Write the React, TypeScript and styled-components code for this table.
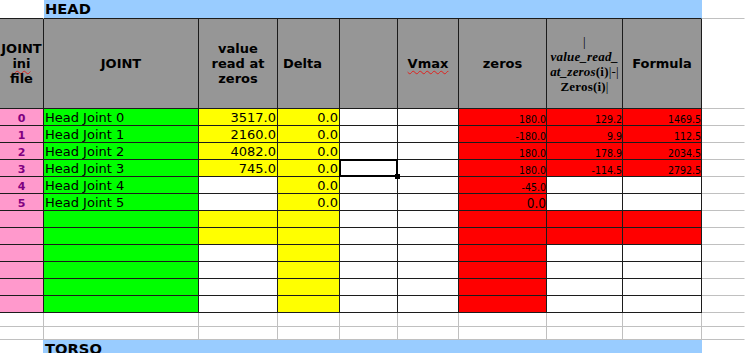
import React from 'react';
import styled, { createGlobalStyle } from 'styled-components';

const COL = {
  green: '#00ff00',
  yellow: '#ffff00',
  red: '#ff0000',
  pink: '#ff99cc',
  blue: '#99ccff',
  grey: '#969696',
  line: '#1c1c1c',
  light: '#c0c0c0',
  white: '#ffffff',
};

const GlobalStyle = createGlobalStyle`
  html, body { margin: 0; padding: 0; background: #fff; overflow: hidden; }
  body { font-family: "DejaVu Sans", "Liberation Sans", sans-serif; }
`;

const Sheet = styled.div`
  display: grid;
  grid-template-columns: 44px 155px 79px 62px 58px 61px 88px 76px 79px 1fr;
  grid-template-rows: 19px 90px repeat(12, 17px) 14px 13px 20px;
  width: 745px;
  height: 353px;
  overflow: hidden;
`;

type CellProps = {
  $bg?: string;
  $right?: string;
  $bottom?: string;
  $align?: 'left' | 'right' | 'center';
  $span?: number;
};

const Cell = styled.div<CellProps>`
  box-sizing: border-box;
  position: relative;
  min-width: 0;
  grid-column: span ${(p) => p.$span ?? 1};
  background: ${(p) => p.$bg ?? COL.white};
  border-right: 1px solid ${(p) => p.$right ?? 'transparent'};
  border-bottom: 1px solid ${(p) => p.$bottom ?? 'transparent'};
  display: flex;
  align-items: flex-end;
  justify-content: ${(p) =>
    p.$align === 'right' ? 'flex-end' : p.$align === 'center' ? 'center' : 'flex-start'};
  padding: 0 1px;
  color: #000;
  white-space: nowrap;
`;

const TitleBar = styled(Cell)`
  align-items: flex-start;
  font-size: 14.7px;
  font-weight: bold;
  line-height: 17px;
  padding-left: 1px;
`;

const HeadCell = styled(Cell)`
  align-items: center;
  text-align: center;
  font-size: 13px;
  font-weight: bold;
  line-height: 15px;
  overflow: hidden;
`;

const HeadLeft = styled(HeadCell)`
  justify-content: flex-start;
  padding-left: 5px;
`;

const Spell = styled.span`
  text-decoration: underline wavy #e0201c;
  text-decoration-thickness: 1px;
  text-underline-offset: 2px;
`;

const FormulaText = styled.div`
  font-family: "Liberation Serif", "DejaVu Serif", serif;
  font-size: 13px;
  line-height: 15px;
  font-weight: normal;
  letter-spacing: 0.2px;
`;

const Ital = styled.span`
  font-style: italic;
  font-weight: bold;
`;

const Strong = styled.span`
  font-weight: bold;
`;

const IndexCell = styled(Cell)`
  justify-content: center;
  font-size: 11px;
  font-weight: bold;
  line-height: 13px;
  color: #800080;
`;

const TextCell = styled(Cell)`
  font-size: 13px;
  line-height: 14px;
  overflow: hidden;
`;

const SmallCell = styled(Cell)<{ $small?: boolean }>`
  font-family: "DejaVu Sans Condensed", "DejaVu Sans", sans-serif;
  font-stretch: condensed;
  font-size: ${(p) => (p.$small ? '10.5px' : '13.5px')};
  line-height: ${(p) => (p.$small ? '12px' : '14px')};
  padding-right: 0;
  overflow: hidden;
`;

const Selection = styled.div`
  position: absolute;
  z-index: 2;
  top: -1px;
  left: -1px;
  width: 59px;
  height: 18px;
  box-sizing: border-box;
  border: 2px solid #000;
  pointer-events: none;
`;

const Handle = styled.div`
  position: absolute;
  z-index: 3;
  left: 55px;
  top: 14px;
  width: 5px;
  height: 5px;
  background: #000;
`;

type Row = {
  idx: string;
  name: string;
  read: string;
  readYellow: boolean;
  delta: string;
  zero: string;
  zeroSmall: boolean;
  diff: string;
  formula: string;
  hiRed: boolean;
};

const rows: Row[] = [
  { idx: '0', name: 'Head Joint 0', read: '3517.0', readYellow: true, delta: '0.0', zero: '180.0', zeroSmall: true, diff: '129.2', formula: '1469.5', hiRed: true },
  { idx: '1', name: 'Head Joint 1', read: '2160.0', readYellow: true, delta: '0.0', zero: '-180.0', zeroSmall: true, diff: '9.9', formula: '112.5', hiRed: true },
  { idx: '2', name: 'Head Joint 2', read: '4082.0', readYellow: true, delta: '0.0', zero: '180.0', zeroSmall: true, diff: '178.9', formula: '2034.5', hiRed: true },
  { idx: '3', name: 'Head Joint 3', read: '745.0', readYellow: true, delta: '0.0', zero: '180.0', zeroSmall: true, diff: '-114.5', formula: '2792.5', hiRed: true },
  { idx: '4', name: 'Head Joint 4', read: '', readYellow: false, delta: '0.0', zero: '-45.0', zeroSmall: true, diff: '', formula: '', hiRed: false },
  { idx: '5', name: 'Head Joint 5', read: '', readYellow: false, delta: '0.0', zero: '0.0', zeroSmall: false, diff: '', formula: '', hiRed: false },
  { idx: '', name: '', read: '', readYellow: true, delta: '', zero: '', zeroSmall: true, diff: '', formula: '', hiRed: true },
  { idx: '', name: '', read: '', readYellow: true, delta: '', zero: '', zeroSmall: true, diff: '', formula: '', hiRed: true },
  { idx: '', name: '', read: '', readYellow: false, delta: '', zero: '', zeroSmall: true, diff: '', formula: '', hiRed: false },
  { idx: '', name: '', read: '', readYellow: false, delta: '', zero: '', zeroSmall: true, diff: '', formula: '', hiRed: false },
  { idx: '', name: '', read: '', readYellow: false, delta: '', zero: '', zeroSmall: true, diff: '', formula: '', hiRed: false },
  { idx: '', name: '', read: '', readYellow: false, delta: '', zero: '', zeroSmall: true, diff: '', formula: '', hiRed: false },
];

const D = COL.line;
const L = COL.light;

function DataRow({ row, i }: { row: Row; i: number }) {
  const selected = i === 3;
  return (
    <>
      <IndexCell $bg={COL.pink} $right={D} $bottom={D}>{row.idx}</IndexCell>
      <TextCell $bg={COL.green} $right={D} $bottom={D}>{row.name}</TextCell>
      <TextCell $bg={row.readYellow ? COL.yellow : COL.white} $right={D} $bottom={D} $align="right">{row.read}</TextCell>
      <TextCell $bg={COL.yellow} $right={D} $bottom={D} $align="right">{row.delta}</TextCell>
      <Cell $right={D} $bottom={D}>
        {selected && (
          <>
            <Selection />
            <Handle />
          </>
        )}
      </Cell>
      <Cell $right={D} $bottom={D} />
      <SmallCell $bg={COL.red} $right={D} $bottom={D} $align="right" $small={row.zeroSmall}>{row.zero}</SmallCell>
      <SmallCell $bg={row.hiRed ? COL.red : COL.white} $right={D} $bottom={D} $align="right" $small>{row.diff}</SmallCell>
      <SmallCell $bg={row.hiRed ? COL.red : COL.white} $right={D} $bottom={D} $align="right" $small>{row.formula}</SmallCell>
      <Cell $bottom={L} />
    </>
  );
}

function EmptyRow() {
  return (
    <>
      {Array.from({ length: 9 }).map((_, k) => (
        <Cell key={k} $right={L} $bottom={L} />
      ))}
      <Cell $bottom={L} />
    </>
  );
}

export default function App() {
  return (
    <>
      <GlobalStyle />
      <Sheet>
        {/* HEAD title row */}
        <Cell $bottom={D} />
        <TitleBar $bg={COL.blue} $bottom={D} $span={8}>HEAD</TitleBar>
        <Cell $bottom={L} />

        {/* column headers */}
        <HeadCell $bg={COL.grey} $right={D} $bottom={D} $align="center">
          <div>
            JOINT
            <br />
            <Spell>ini</Spell>
            <br />
            file
          </div>
        </HeadCell>
        <HeadCell $bg={COL.grey} $right={D} $bottom={D} $align="center">JOINT</HeadCell>
        <HeadCell $bg={COL.grey} $right={D} $bottom={D} $align="center">
          <div>
            value
            <br />
            read at
            <br />
            zeros
          </div>
        </HeadCell>
        <HeadLeft $bg={COL.grey} $right={D} $bottom={D}>Delta</HeadLeft>
        <HeadCell $bg={COL.grey} $right={D} $bottom={D} />
        <HeadCell $bg={COL.grey} $right={D} $bottom={D} $align="center">
          <Spell>Vmax</Spell>
        </HeadCell>
        <HeadCell $bg={COL.grey} $right={D} $bottom={D} $align="center">zeros</HeadCell>
        <HeadCell $bg={COL.grey} $right={D} $bottom={D} $align="center">
          <FormulaText>
            |
            <br />
            <Ital>value_read_</Ital>
            <br />
            <Ital>at_zeros</Ital>
            <Strong>(i)</Strong>|-|
            <br />
            <Strong>Zeros(i)</Strong>|
          </FormulaText>
        </HeadCell>
        <HeadCell $bg={COL.grey} $right={D} $bottom={D} $align="center">Formula</HeadCell>
        <Cell $bottom={L} />

        {rows.map((r, i) => (
          <DataRow key={i} row={r} i={i} />
        ))}

        <EmptyRow />
        <EmptyRow />

        {/* TORSO title row */}
        <Cell $right={COL.blue} />
        <TitleBar $bg={COL.blue} $span={8}>TORSO</TitleBar>
        <Cell />
      </Sheet>
    </>
  );
}
